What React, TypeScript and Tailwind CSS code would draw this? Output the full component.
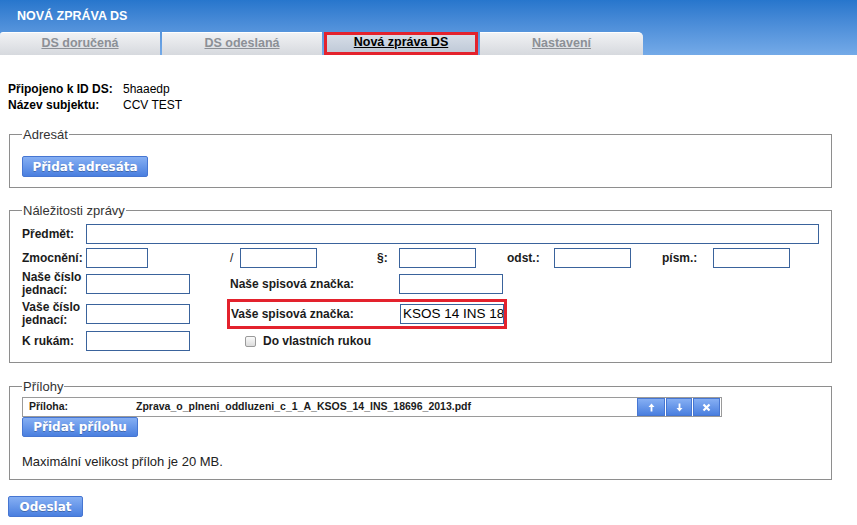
import React from 'react';

const btn =
  "inline-flex items-center justify-center bg-linear-to-b from-[#86aff3] to-[#4a7fdf] border border-[#4676d2] rounded-[2px] text-white font-bold text-[12px] font-['DejaVu_Sans',Verdana,sans-serif] [text-shadow:0_1px_0_rgba(0,0,0,0.25)]";

const field = 'h-[20px] border border-[#3a639c] bg-white';

function Tab({ label, active, w, rounded }: { label: string; active?: boolean; w: string; rounded: string }) {
  return (
    <div
      className={`${w} ${rounded} h-[23px] flex items-center justify-center pb-[2px] font-bold text-[12.5px] underline ${
        active
          ? 'border-[3px] border-[#e3222d] bg-linear-to-b from-[#d6dde7] to-[#c0cad8] text-black'
          : 'bg-linear-to-b from-[#f1f2f4] to-[#d6d9de] text-[#8c9096] border-t border-white'
      }`}
    >
      {label}
    </div>
  );
}

function Arrow({ dir }: { dir: 'up' | 'down' | 'x' }) {
  if (dir === 'x')
    return (
      <svg width="9" height="9" viewBox="0 0 9 9">
        <path d="M1.5 1.5 L7.5 7.5 M7.5 1.5 L1.5 7.5" stroke="white" strokeWidth="2.2" />
      </svg>
    );
  return (
    <svg width="7" height="9" viewBox="0 0 7 9" className={dir === 'down' ? 'rotate-180' : ''}>
      <path d="M3.5 0.5 L6.5 4 L4.4 4 L4.4 8.5 L2.6 8.5 L2.6 4 L0.5 4 Z" fill="white" />
    </svg>
  );
}

export default function App() {
  return (
    <div className="w-[857px] h-[525px] overflow-hidden bg-white text-black text-[12px] font-['Liberation_Sans',Arial,sans-serif]">
      {/* header */}
      <div className="h-[55px] bg-linear-to-b from-[#2776cc] to-[#74aae8]">
        <div className="h-[32px] pl-[17px] flex items-center text-white font-bold text-[12.5px]">NOVÁ ZPRÁVA DS</div>
        <div className="flex gap-[2px]">
          <Tab label="DS doručená" w="w-[160px]" rounded="rounded-tl-[3px]" />
          <Tab label="DS odeslaná" w="w-[160px]" rounded="" />
          <Tab label="Nová zpráva DS" w="w-[154px]" rounded="" active />
          <Tab label="Nastavení" w="w-[163px]" rounded="rounded-tr-[5px]" />
        </div>
      </div>

      <div className="px-[8px]">
        {/* info */}
        <div className="mt-[26px] grid grid-cols-[115px_auto] leading-[16px]">
          <span className="font-bold">Připojeno k ID DS:</span>
          <span>5haaedp</span>
          <span className="font-bold">Název subjektu:</span>
          <span>CCV TEST</span>
        </div>

        {/* Adresát */}
        <fieldset className="mt-[14px] ml-[1px] w-[823px] border border-[#8e8e8e] pl-[12px] pb-[10px]">
          <legend className="px-[1px] text-[13px] leading-[15px] text-[#333]">Adresát</legend>
          <button className={`${btn} mt-[14px] w-[126px] h-[21px]`}>Přidat adresáta</button>
        </fieldset>

        {/* Náležitosti */}
        <fieldset className="mt-[15px] ml-[1px] w-[823px] border border-[#8e8e8e] pl-[12px] pb-[10px]">
          <legend className="px-[1px] text-[13px] leading-[15px] text-[#333]">Náležitosti zprávy</legend>
          <div className="mt-[4px] grid grid-cols-[64px_144px_10px_137px_22px_108px_47px_108px_51px_106px] grid-rows-[24px_24px_28px_32px_22px] items-center font-bold text-[#1b1b1b]">
            <span>Předmět:</span>
            <div className={`${field} col-start-2 col-end-11`} />

            <span>Zmocnění:</span>
            <div className={`${field} w-[62px]`} />
            <span className="font-normal">/</span>
            <div className={`${field} w-[77px]`} />
            <span>§:</span>
            <div className={`${field} w-[77px]`} />
            <span>odst.:</span>
            <div className={`${field} w-[77px]`} />
            <span>písm.:</span>
            <div className={`${field} w-[77px]`} />

            <span className="leading-[13px]">
              Naše číslo
              <br />
              jednací:
            </span>
            <div className={`${field} w-[104px]`} />
            <span className="col-start-3 col-end-6">Naše spisová značka:</span>
            <div className={`${field} w-[104px]`} />
            <span className="col-start-7 col-end-11" />

            <span className="leading-[13px]">
              Vaše číslo
              <br />
              jednací:
            </span>
            <div className={`${field} w-[104px]`} />
            <div className="col-start-3 col-end-7 -ml-[3px] h-[30px] border-[3px] border-[#e3222d] flex items-center justify-between pl-[1px]">
              <span>Vaše spisová značka:</span>
              <div className={`${field} w-[104px] flex items-center px-[2px] overflow-hidden font-normal text-[13.5px] text-black whitespace-nowrap`}>
                KSOS 14 INS 18
              </div>
            </div>
            <span className="col-start-7 col-end-11" />

            <span>K rukám:</span>
            <div className={`${field} w-[104px]`} />
            <label className="col-start-3 col-end-8 pl-[15px] flex items-center gap-[7px]">
              <span className="w-[11px] h-[11px] rounded-[2px] border border-[#9a9a9a] bg-linear-to-b from-[#fafafa] to-[#dcdcdc]" />
              <span>Do vlastních rukou</span>
            </label>
          </div>
        </fieldset>

        {/* Přílohy */}
        <fieldset className="mt-[16px] ml-[1px] w-[823px] border border-[#8e8e8e] pl-[12px] pb-[10px]">
          <legend className="px-[1px] text-[13px] leading-[15px] text-[#333]">Přílohy</legend>
          <div className="mt-[3px] w-[700px] h-[20px] border border-[#9a9a9a] flex items-center font-bold text-[10.5px] text-[#1b1b1b]">
            <span className="w-[113px] pl-[6px]">Příloha:</span>
            <span className="flex-1">Zprava_o_plneni_oddluzeni_c_1_A_KSOS_14_INS_18696_2013.pdf</span>
            <div className="flex gap-[1px] pr-[1px] h-[18px]">
              <button className={`${btn} w-[28px] h-[18px] rounded-none`}>
                <Arrow dir="up" />
              </button>
              <button className={`${btn} w-[26px] h-[18px] rounded-none`}>
                <Arrow dir="down" />
              </button>
              <button className={`${btn} w-[27px] h-[18px] rounded-none`}>
                <Arrow dir="x" />
              </button>
            </div>
          </div>
          <button className={`${btn} w-[116px] h-[20px]`}>Přidat přílohu</button>
          <p className="mt-[17px] text-[13px] leading-[15px] text-[#222]">Maximální velikost příloh je 20 MB.</p>
        </fieldset>

        <button className={`${btn} mt-[16px] w-[75px] h-[21px]`}>Odeslat</button>
      </div>
    </div>
  );
}
